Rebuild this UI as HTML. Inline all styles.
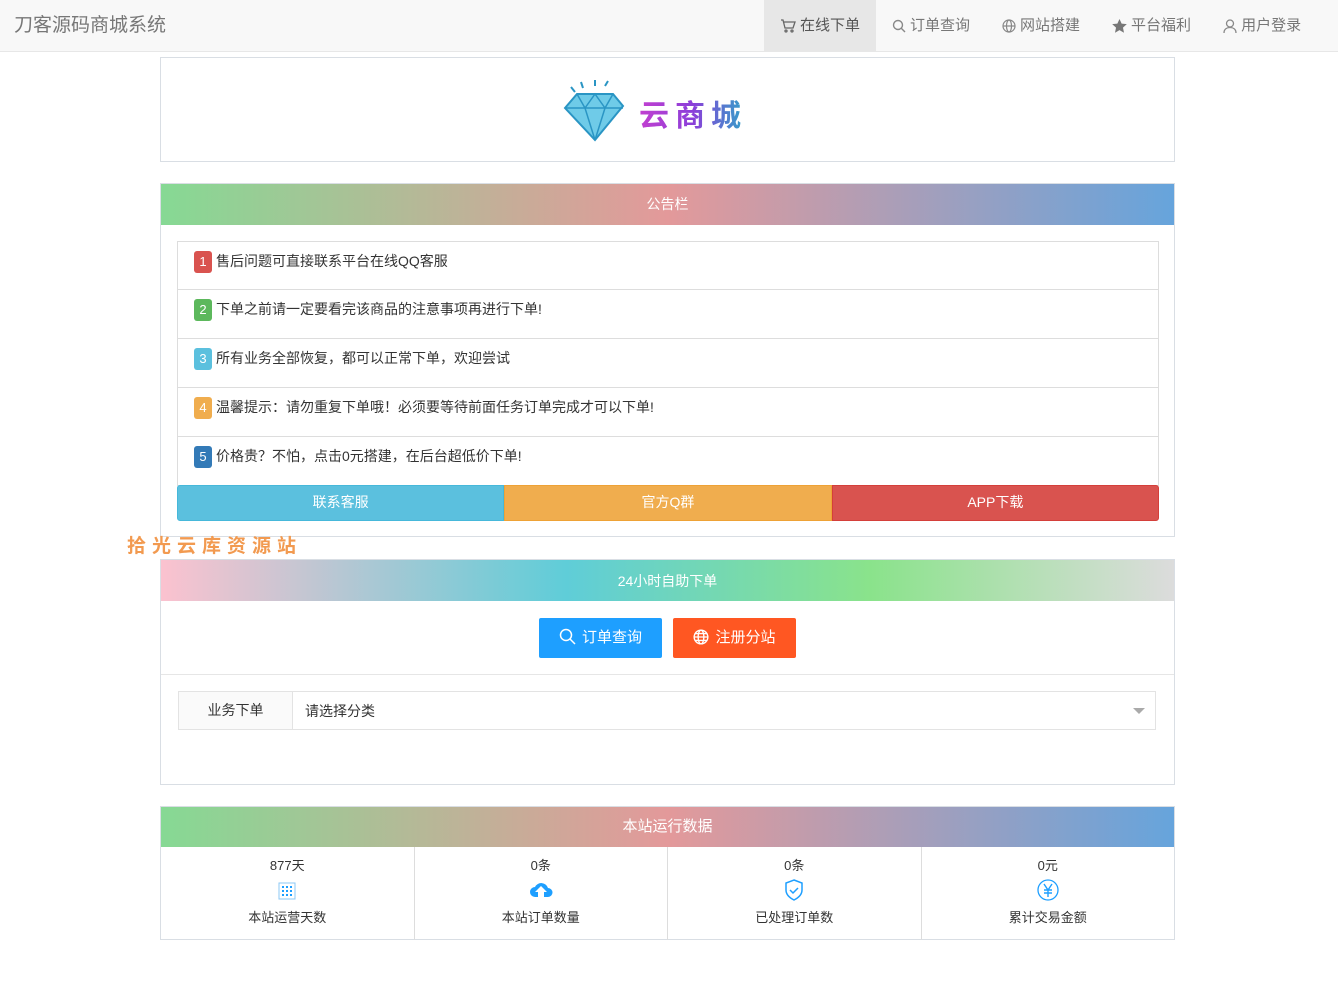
<!DOCTYPE html>
<html><head><meta charset="utf-8"><style>
*{box-sizing:border-box;margin:0;padding:0}
body{width:1338px;height:981px;background:#fff;font-family:"Liberation Sans","Noto Sans CJK SC",sans-serif;font-size:14px;color:#333;position:relative;overflow:hidden}
.nav{position:absolute;left:0;top:0;width:1338px;height:52px;background:#f8f8f8;border-bottom:1px solid #e7e7e7}
.brand{position:absolute;left:14px;top:10px;font-size:19px;color:#777}
.menu{position:absolute;left:764px;top:0;display:flex;height:51px}
.menu div{padding:0 16px;line-height:44px;color:#777;font-size:15px;display:flex;align-items:center;gap:4px;height:51px}
.menu div.act{background:#e7e7e7;color:#555}
.box{position:absolute;left:160px;width:1015px;border:1px solid #d9dee4;background:#fff}
.hd{height:41px;line-height:41px;text-align:center;color:#fff;font-size:14px}
.g1{background:linear-gradient(90deg,#86d994,#e3999a 50%,#66a4dc)}
.g2{background:linear-gradient(90deg,#fbc2cf,#5fcdd8 40%,#8ae38b 70%,#dcdcdc)}
.li{position:absolute;left:16px;width:982px;height:49px;border:1px solid #ddd;border-top:none;padding:9px 16px;font-size:14px;color:#333}
.n{display:inline-block;width:18px;height:22px;line-height:22px;text-align:center;color:#fff;border-radius:3px;font-size:13px;margin-right:4px;vertical-align:middle}
.btns{position:absolute;left:16px;top:301px;width:982px;height:36px;display:flex}
.btns div{flex:1;color:#fff;text-align:center;line-height:32px;font-size:14px}
.stat{display:flex;height:93px}
.stat div{flex:1;border-right:1px solid #ddd;text-align:center;font-size:13px;color:#333;padding-top:8px}
.stat div:last-child{border-right:none}
</style></head><body>
<div class="nav">
<div class="brand">刀客源码商城系统</div>
<div class="menu">
<div class="act"><svg width="16" height="14" viewBox="0 0 16 14" fill="none" stroke="#666" stroke-width="1.3"><path d="M1 1h2l2 8h8l2-6H4"/><circle cx="6" cy="12" r="1"/><circle cx="12" cy="12" r="1"/></svg>在线下单</div>
<div><svg width="14" height="14" viewBox="0 0 14 14" fill="none" stroke="#888" stroke-width="1.4"><circle cx="6" cy="6" r="4.5"/><path d="M9 9l4 4"/></svg>订单查询</div>
<div><svg width="14" height="14" viewBox="0 0 14 14" fill="none" stroke="#888" stroke-width="1.2"><circle cx="7" cy="7" r="6"/><ellipse cx="7" cy="7" rx="2.5" ry="6"/><path d="M1 7h12"/></svg>网站搭建</div>
<div><svg width="15" height="14" viewBox="0 0 24 23"><path fill="#777" d="M12 0l3.5 7.5 8.5 1-6.3 5.7 1.7 8.3L12 18.3 4.6 22.5l1.7-8.3L0 8.5l8.5-1z"/></svg>平台福利</div>
<div><svg width="14" height="14" viewBox="0 0 14 14" fill="none" stroke="#888" stroke-width="1.3"><circle cx="7" cy="4.5" r="3.5"/><path d="M1 14c0-4 3-5.5 6-5.5s6 1.5 6 5.5"/></svg>用户登录</div>
</div></div>

<div class="box" style="top:57px;height:105px">
<svg style="position:absolute;left:402px;top:22px" width="64" height="62" viewBox="0 0 64 62"><g stroke="#2a95c4" stroke-width="2" fill="none"><path d="M12 12l-4-5M20 8l-2-6M32 6V0M42 6l3-5"/></g><path d="M2 28l12-14h36l10 12-28 34z" fill="#6fcbe8" stroke="#2a95c4" stroke-width="2"/><path d="M2 28h58M14 14l8 14 10 32M50 14l-8 14-10 32M22 28l10-14 10 14" stroke="#2a95c4" stroke-width="1.5" fill="none"/></svg>
<div style="position:absolute;left:478px;top:33px;font-size:30px;font-weight:bold;letter-spacing:6px;background:linear-gradient(90deg,#c23fd0,#8b3fd9,#2ea5c8);-webkit-background-clip:text;color:transparent">云商城</div>
</div>

<div class="box" style="top:183px;height:354px">
<div class="hd g1">公告栏</div>
<div style="position:absolute;left:0;top:57px;width:100%">
<div class="li" style="top:0;border-top:1px solid #ddd"><span class="n" style="background:#d9534f">1</span>售后问题可直接联系平台在线QQ客服</div>
<div class="li" style="top:49px"><span class="n" style="background:#5cb85c">2</span>下单之前请一定要看完该商品的注意事项再进行下单!</div>
<div class="li" style="top:98px"><span class="n" style="background:#5bc0de">3</span>所有业务全部恢复，都可以正常下单，欢迎尝试</div>
<div class="li" style="top:147px"><span class="n" style="background:#f0ad4e">4</span>温馨提示：请勿重复下单哦！必须要等待前面任务订单完成才可以下单!</div>
<div class="li" style="top:196px"><span class="n" style="background:#337ab7">5</span>价格贵？不怕，点击0元搭建，在后台超低价下单!</div>
</div>
<div class="btns"><div style="background:#5bc0de;border:1px solid #46b8da;border-radius:3px 0 0 3px">联系客服</div><div style="background:#f0ad4e;border:1px solid #eea236">官方Q群</div><div style="background:#d9534f;border:1px solid #d43f3a;border-radius:0 3px 3px 0">APP下载</div></div>
</div>
<div style="position:absolute;left:127px;top:531px;font-size:19px;font-weight:bold;color:#f29a50;letter-spacing:6px">拾光云库资源站</div>

<div class="box" style="top:559px;height:226px">
<div class="hd g2" style="line-height:43px">24小时自助下单</div>
<div style="position:absolute;left:378px;top:58px;width:123px;height:40px;background:#1e9fff;color:#fff;border-radius:2px;font-size:15px;line-height:40px;text-align:center"><svg width="17" height="17" viewBox="0 0 17 17" fill="none" stroke="#fff" stroke-width="1.5" style="vertical-align:-3px;margin-right:6px"><circle cx="7" cy="7" r="5.5"/><path d="M11 11l5 5"/></svg>订单查询</div>
<div style="position:absolute;left:512px;top:58px;width:123px;height:40px;background:#ff5722;color:#fff;border-radius:2px;font-size:15px;line-height:40px;text-align:center"><svg width="16" height="16" viewBox="0 0 14 14" fill="none" stroke="#fff" stroke-width="1.2" style="vertical-align:-3px;margin-right:6px"><circle cx="7" cy="7" r="6"/><ellipse cx="7" cy="7" rx="2.5" ry="6"/><path d="M1 7h12M2 4h10M2 10h10"/></svg>注册分站</div>
<div style="position:absolute;left:0;top:114px;width:100%;border-top:1px solid #e6e6e6"></div>
<div style="position:absolute;left:17px;top:131px;width:978px;height:39px;border:1px solid #e3e3e3;display:flex">
<div style="width:114px;background:#fafafa;border-right:1px solid #e3e3e3;text-align:center;line-height:36px">业务下单</div>
<div style="flex:1;padding-left:12px;line-height:39px">请选择分类</div>
<div style="position:absolute;right:10px;top:16px;border:6px solid transparent;border-top:6px solid #aaa"></div>
</div>
</div>

<div class="box" style="top:806px;height:134px">
<div class="hd g1" style="height:40px;line-height:40px;font-size:15px">本站运行数据</div>
<div class="stat">
<div>877天<br><svg width="20" height="20" viewBox="0 0 20 20" style="margin:6px 0 4px"><rect x="2" y="3" width="16" height="16" fill="none" stroke="#8cc8f5"/><g fill="#1e9fff"><rect x="5" y="6" width="2" height="2"/><rect x="9" y="6" width="2" height="2"/><rect x="13" y="6" width="2" height="2"/><rect x="5" y="10" width="2" height="2"/><rect x="9" y="10" width="2" height="2"/><rect x="13" y="10" width="2" height="2"/><rect x="5" y="14" width="2" height="2"/><rect x="9" y="14" width="2" height="2"/><rect x="13" y="14" width="2" height="2"/></g></svg><br>本站运营天数</div>
<div>0条<br><svg width="24" height="20" viewBox="0 0 24 20" style="margin:6px 0 4px"><path d="M6 17a5 5 0 010-10 7 7 0 0113 1 4.5 4.5 0 010 9h-4v-5h3l-6-6-6 6h3v5z" fill="#1e9fff"/></svg><br>本站订单数量</div>
<div>0条<br><svg width="20" height="22" viewBox="0 0 20 22" style="margin:5px 0 3px"><path d="M10 1l8 3v7c0 5-4 8-8 10C6 19 2 16 2 11V4z" fill="none" stroke="#1e9fff" stroke-width="1.5"/><path d="M6 11l3 3 5-5" fill="none" stroke="#1e9fff" stroke-width="1.5"/></svg><br>已处理订单数</div>
<div>0元<br><svg width="22" height="22" viewBox="0 0 22 22" style="margin:5px 0 3px"><circle cx="11" cy="11" r="10" fill="none" stroke="#1e9fff" stroke-width="1.3"/><path d="M7 5l4 6 4-6M11 11v7M7 11h8M7 14h8" fill="none" stroke="#1e9fff" stroke-width="1.4"/></svg><br>累计交易金额</div>
</div>
</div>
</body></html>
